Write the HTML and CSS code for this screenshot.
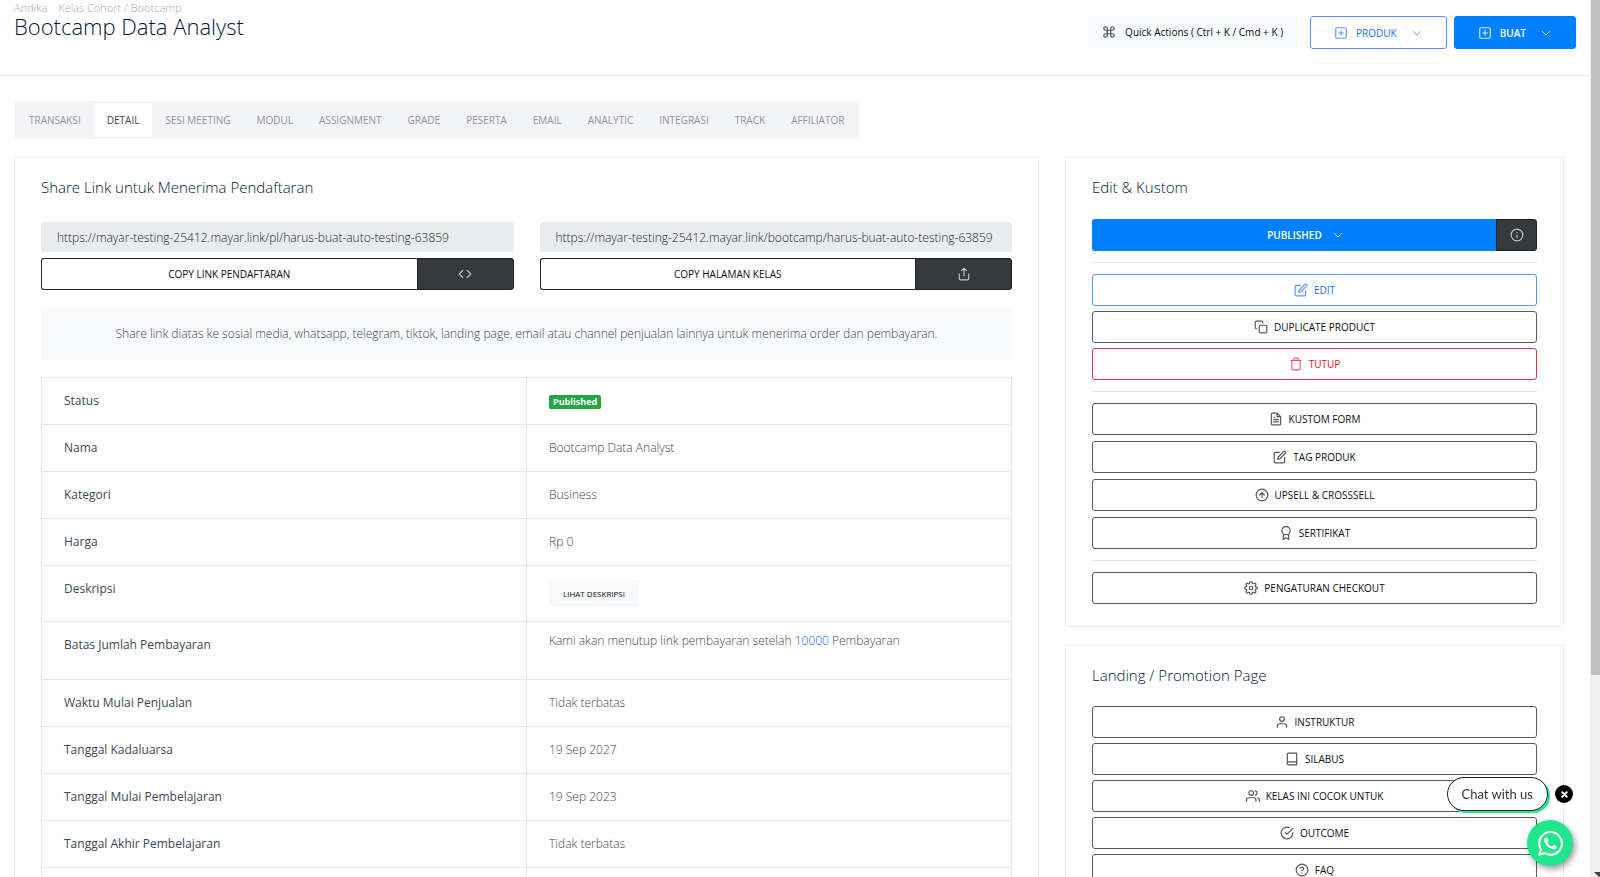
FILE: index.html
```html
<!DOCTYPE html>
<html lang="id">
<head>
<meta charset="utf-8">
<meta name="viewport" content="width=device-width, initial-scale=1">
<title>Bootcamp Data Analyst</title>
<link rel="stylesheet" href="styles.css">
</head>
<body>
<svg class="sprite" aria-hidden="true">
  <symbol id="i-command" viewBox="0 0 24 24"><path d="M18 3a3 3 0 0 0-3 3v12a3 3 0 1 0 3-3H6a3 3 0 1 0 3 3V6a3 3 0 1 0-3 3h12a3 3 0 1 0 0-6z"/></symbol>
  <symbol id="i-plus" viewBox="0 0 24 24"><rect x="3" y="3" width="18" height="18" rx="2"/><path d="M12 8v8M8 12h8"/></symbol>
  <symbol id="i-down" viewBox="0 0 24 24"><path d="M5 9l7 7 7-7"/></symbol>
  <symbol id="i-code" viewBox="0 0 24 24"><path d="M16 18l6-6-6-6M8 6l-6 6 6 6"/></symbol>
  <symbol id="i-share" viewBox="0 0 24 24"><path d="M4 12v8a2 2 0 0 0 2 2h12a2 2 0 0 0 2-2v-8M16 6l-4-4-4 4M12 2v13"/></symbol>
  <symbol id="i-info" viewBox="0 0 24 24"><circle cx="12" cy="12" r="10"/><path d="M12 16v-4M12 8h.01"/></symbol>
  <symbol id="i-edit" viewBox="0 0 24 24"><path d="M11 4H4a2 2 0 0 0-2 2v14a2 2 0 0 0 2 2h14a2 2 0 0 0 2-2v-7"/><path d="M18.500 2.500a2.121 2.121 0 0 1 3 3L12 15l-4 1 1-4 9.500-9.500z"/></symbol>
  <symbol id="i-copy" viewBox="0 0 24 24"><rect x="9" y="9" width="13" height="13" rx="2"/><path d="M5 15H4a2 2 0 0 1-2-2V4a2 2 0 0 1 2-2h9a2 2 0 0 1 2 2v1"/></symbol>
  <symbol id="i-trash" viewBox="0 0 24 24"><path d="M3 6h18M19 6v14a2 2 0 0 1-2 2H7a2 2 0 0 1-2-2V6M8 6V4a2 2 0 0 1 2-2h4a2 2 0 0 1 2 2v2"/></symbol>
  <symbol id="i-file" viewBox="0 0 24 24"><path d="M14 2H6a2 2 0 0 0-2 2v16a2 2 0 0 0 2 2h12a2 2 0 0 0 2-2V8zM14 2v6h6M16 13H8M16 17H8M10 9H8"/></symbol>
  <symbol id="i-up" viewBox="0 0 24 24"><circle cx="12" cy="12" r="10"/><path d="M16 12l-4-4-4 4M12 16V8"/></symbol>
  <symbol id="i-award" viewBox="0 0 24 24"><circle cx="12" cy="8" r="7"/><path d="M8.210 13.890L7 23l5-3 5 3-1.210-9.120"/></symbol>
  <symbol id="i-gear" viewBox="0 0 24 24"><circle cx="12" cy="12" r="3"/><path d="M19.400 15a1.650 1.650 0 0 0 .33 1.820l.06.06a2 2 0 0 1 0 2.830 2 2 0 0 1-2.830 0l-.06-.06a1.650 1.650 0 0 0-1.820-.33 1.650 1.650 0 0 0-1 1.510V21a2 2 0 0 1-2 2 2 2 0 0 1-2-2v-.09A1.650 1.650 0 0 0 9 19.400a1.650 1.650 0 0 0-1.820.33l-.06.06a2 2 0 0 1-2.830 0 2 2 0 0 1 0-2.830l.06-.06a1.650 1.650 0 0 0 .33-1.820 1.650 1.650 0 0 0-1.510-1H3a2 2 0 0 1-2-2 2 2 0 0 1 2-2h.09A1.650 1.650 0 0 0 4.600 9a1.650 1.650 0 0 0-.33-1.820l-.06-.06a2 2 0 0 1 0-2.830 2 2 0 0 1 2.830 0l.06.06a1.650 1.650 0 0 0 1.820.33H9a1.650 1.650 0 0 0 1-1.510V3a2 2 0 0 1 2-2 2 2 0 0 1 2 2v.09a1.650 1.650 0 0 0 1 1.510 1.650 1.650 0 0 0 1.820-.33l.06-.06a2 2 0 0 1 2.830 0 2 2 0 0 1 0 2.830l-.06.06a1.650 1.650 0 0 0-.33 1.820V9a1.650 1.650 0 0 0 1.510 1H21a2 2 0 0 1 2 2 2 2 0 0 1-2 2h-.09a1.650 1.650 0 0 0-1.510 1z"/></symbol>
  <symbol id="i-user" viewBox="0 0 24 24"><path d="M20 21v-2a4 4 0 0 0-4-4H8a4 4 0 0 0-4 4v2"/><circle cx="12" cy="7" r="4"/></symbol>
  <symbol id="i-book" viewBox="0 0 24 24"><path d="M4 19.500A2.500 2.500 0 0 1 6.500 17H20"/><path d="M6.500 2H20v20H6.500A2.500 2.500 0 0 1 4 19.500v-15A2.500 2.500 0 0 1 6.500 2z"/></symbol>
  <symbol id="i-users" viewBox="0 0 24 24"><path d="M17 21v-2a4 4 0 0 0-4-4H5a4 4 0 0 0-4 4v2"/><circle cx="9" cy="7" r="4"/><path d="M23 21v-2a4 4 0 0 0-3-3.870M16 3.130a4 4 0 0 1 0 7.750"/></symbol>
  <symbol id="i-check" viewBox="0 0 24 24"><path d="M22 11.080V12a10 10 0 1 1-5.930-9.140M22 4L12 14.010l-3-3"/></symbol>
  <symbol id="i-help" viewBox="0 0 24 24"><circle cx="12" cy="12" r="10"/><path d="M9.090 9a3 3 0 0 1 5.830 1c0 2-3 3-3 3M12 17h.01"/></symbol>
  <symbol id="i-x" viewBox="0 0 24 24"><path d="M6 6l12 12M18 6L6 18"/></symbol>
</svg>

<div class="app">
  <div class="page">
    <header class="header">
      <div class="heading">
        <nav class="crumbs" aria-label="Breadcrumb"><a href="#">Andika</a><a href="#">Kelas Cohort / Bootcamp</a></nav>
        <h1 class="title">Bootcamp Data Analyst</h1>
      </div>
      <div class="actions">
        <button class="btn btn-quick" type="button"><svg class="icon"><use href="#i-command"/></svg>Quick Actions ( Ctrl + K / Cmd + K )</button>
        <div class="actions-main">
          <button class="btn btn-head btn-outline-blue" type="button"><svg class="icon"><use href="#i-plus"/></svg>PRODUK<svg class="icon caret"><use href="#i-down"/></svg></button>
          <button class="btn btn-head btn-blue" type="button"><svg class="icon"><use href="#i-plus"/></svg>BUAT<svg class="icon caret"><use href="#i-down"/></svg></button>
        </div>
      </div>
    </header>

    <main class="content">
      <nav class="tabs" aria-label="Produk">
        <a class="tab" href="#">TRANSAKSI</a>
        <a class="tab tab-active" href="#" aria-current="page">DETAIL</a>
        <a class="tab" href="#">SESI MEETING</a>
        <a class="tab" href="#">MODUL</a>
        <a class="tab" href="#">ASSIGNMENT</a>
        <a class="tab" href="#">GRADE</a>
        <a class="tab" href="#">PESERTA</a>
        <a class="tab" href="#">EMAIL</a>
        <a class="tab" href="#">ANALYTIC</a>
        <a class="tab" href="#">INTEGRASI</a>
        <a class="tab" href="#">TRACK</a>
        <a class="tab" href="#">AFFILIATOR</a>
      </nav>

      <div class="columns">
        <section class="card">
          <h2 class="card-title">Share Link untuk Menerima Pendaftaran</h2>
          <div class="links">
            <div class="link">
              <input class="url" type="text" readonly aria-label="Link pendaftaran" value="https://mayar-testing-25412.mayar.link/pl/harus-buat-auto-testing-63859">
              <div class="split">
                <button class="btn btn-dark-line" type="button">COPY LINK PENDAFTARAN</button>
                <button class="btn btn-dark btn-side" type="button" aria-label="Embed"><svg class="icon"><use href="#i-code"/></svg></button>
              </div>
            </div>
            <div class="link">
              <input class="url" type="text" readonly aria-label="Halaman kelas" value="https://mayar-testing-25412.mayar.link/bootcamp/harus-buat-auto-testing-63859">
              <div class="split">
                <button class="btn btn-dark-line" type="button">COPY HALAMAN KELAS</button>
                <button class="btn btn-dark btn-side" type="button" aria-label="Bagikan"><svg class="icon"><use href="#i-share"/></svg></button>
              </div>
            </div>
          </div>
          <p class="note">Share link diatas ke sosial media, whatsapp, telegram, tiktok, landing page, email atau channel penjualan lainnya untuk menerima order dan pembayaran.</p>
          <table class="details">
            <tbody>
              <tr><th scope="row">Status</th><td><span class="badge">Published</span></td></tr>
              <tr><th scope="row">Nama</th><td>Bootcamp Data Analyst</td></tr>
              <tr><th scope="row">Kategori</th><td>Business</td></tr>
              <tr><th scope="row">Harga</th><td>Rp 0</td></tr>
              <tr><th scope="row">Deskripsi</th><td><button class="btn btn-light" type="button">LIHAT DESKRIPSI</button></td></tr>
              <tr class="row-limit"><th scope="row">Batas Jumlah Pembayaran</th><td>Kami akan menutup link pembayaran setelah <a href="#">10000</a> Pembayaran</td></tr>
              <tr><th scope="row">Waktu Mulai Penjualan</th><td>Tidak terbatas</td></tr>
              <tr><th scope="row">Tanggal Kadaluarsa</th><td>19 Sep 2027</td></tr>
              <tr><th scope="row">Tanggal Mulai Pembelajaran</th><td>19 Sep 2023</td></tr>
              <tr><th scope="row">Tanggal Akhir Pembelajaran</th><td>Tidak terbatas</td></tr>
              <tr><th scope="row"></th><td></td></tr>
            </tbody>
          </table>
        </section>

        <aside class="side">
          <section class="card">
            <h2 class="card-title">Edit &amp; Kustom</h2>
            <div class="split split-status">
              <button class="btn btn-blue" type="button">PUBLISHED<svg class="icon"><use href="#i-down"/></svg></button>
              <button class="btn btn-dark btn-info" type="button" aria-label="Info"><svg class="icon"><use href="#i-info"/></svg></button>
            </div>
            <hr class="rule">
            <div class="stack">
              <button class="btn btn-outline-blue" type="button"><svg class="icon"><use href="#i-edit"/></svg>EDIT</button>
              <button class="btn btn-line" type="button"><svg class="icon"><use href="#i-copy"/></svg>DUPLICATE PRODUCT</button>
              <button class="btn btn-outline-red" type="button"><svg class="icon"><use href="#i-trash"/></svg>TUTUP</button>
            </div>
            <hr class="rule">
            <div class="stack stack-loose">
              <button class="btn btn-line" type="button"><svg class="icon"><use href="#i-file"/></svg>KUSTOM FORM</button>
              <button class="btn btn-line" type="button"><svg class="icon"><use href="#i-edit"/></svg>TAG PRODUK</button>
              <button class="btn btn-line" type="button"><svg class="icon"><use href="#i-up"/></svg>UPSELL &amp; CROSSSELL</button>
              <button class="btn btn-line" type="button"><svg class="icon"><use href="#i-award"/></svg>SERTIFIKAT</button>
            </div>
            <hr class="rule">
            <div class="stack">
              <button class="btn btn-line" type="button"><svg class="icon"><use href="#i-gear"/></svg>PENGATURAN CHECKOUT</button>
            </div>
          </section>

          <section class="card">
            <h2 class="card-title">Landing / Promotion Page</h2>
            <div class="stack">
              <button class="btn btn-line" type="button"><svg class="icon"><use href="#i-user"/></svg>INSTRUKTUR</button>
              <button class="btn btn-line" type="button"><svg class="icon"><use href="#i-book"/></svg>SILABUS</button>
              <button class="btn btn-line" type="button"><svg class="icon"><use href="#i-users"/></svg>KELAS INI COCOK UNTUK</button>
              <button class="btn btn-line" type="button"><svg class="icon"><use href="#i-check"/></svg>OUTCOME</button>
              <button class="btn btn-line" type="button"><svg class="icon"><use href="#i-help"/></svg>FAQ</button>
            </div>
          </section>
        </aside>
      </div>
    </main>
  </div>
  <div class="scrollbar" aria-hidden="true"><div class="thumb"></div><svg class="arrow" viewBox="0 0 10 5"><path d="M0 0h10L5 5z"/></svg></div>
</div>

<div class="chat">
  <div class="chat-row">
    <button class="chat-label" type="button">Chat with us</button>
    <button class="chat-close" type="button" aria-label="Tutup chat"><svg class="icon"><use href="#i-x"/></svg></button>
  </div>
  <a class="chat-wa" href="#" aria-label="WhatsApp"><svg viewBox="0 0 24 24"><path d="M17.472 14.382c-.297-.149-1.758-.867-2.03-.967-.273-.099-.471-.148-.67.15-.197.297-.767.966-.94 1.164-.173.199-.347.223-.644.075-.297-.15-1.255-.463-2.39-1.475-.883-.788-1.48-1.761-1.653-2.059-.173-.297-.018-.458.13-.606.134-.133.298-.347.446-.52.149-.174.198-.298.298-.497.099-.198.05-.371-.025-.52-.075-.149-.669-1.612-.916-2.207-.242-.579-.487-.5-.669-.51-.173-.008-.371-.01-.57-.01-.198 0-.52.074-.792.372-.272.297-1.04 1.016-1.04 2.479 0 1.462 1.065 2.875 1.213 3.074.149.198 2.096 3.2 5.077 4.487.709.306 1.262.489 1.694.625.712.227 1.36.195 1.871.118.571-.085 1.758-.719 2.006-1.413.248-.694.248-1.289.173-1.413-.074-.124-.272-.198-.57-.347m-5.421 7.403h-.004a9.87 9.87 0 01-5.031-1.378l-.361-.214-3.741.982.998-3.648-.235-.374a9.86 9.86 0 01-1.51-5.26c.001-5.45 4.436-9.884 9.888-9.884 2.64 0 5.122 1.03 6.988 2.898a9.825 9.825 0 012.893 6.994c-.003 5.45-4.437 9.884-9.885 9.884m8.413-18.297A11.815 11.815 0 0012.05 0C5.495 0 .16 5.335.157 11.892c0 2.096.547 4.142 1.588 5.945L.057 24l6.305-1.654a11.882 11.882 0 005.683 1.448h.005c6.554 0 11.89-5.335 11.893-11.893a11.821 11.821 0 00-3.48-8.413z"/></svg></a>
</div>
</body>
</html>
```
FILE: styles.css
```css
* { box-sizing: border-box; }

body {
  margin: 0;
  background: #fff;
  color: #3b4856;
  font: 300 12px/18px "Open Sans", "Noto Sans", sans-serif;
}

h1, h2, p { margin: 0; }
a { color: inherit; text-decoration: none; }
.sprite { display: none; }

.icon {
  width: 14px;
  height: 14px;
  flex: none;
  fill: none;
  stroke: currentColor;
  stroke-width: 2;
  stroke-linecap: round;
  stroke-linejoin: round;
  opacity: 0.7;
}

/* Shell */
.app { display: flex; height: 100vh; overflow: hidden; }
.page { flex: 1; min-width: 0; }

.scrollbar {
  display: flex;
  flex-direction: column;
  justify-content: space-between;
  width: 10px;
  padding-left: 1px;
  background: #f1f1f1;
  overflow: hidden;
}
.thumb { height: 77%; background: #c1c1c1; }
.arrow { width: 10px; height: 5px; margin-left: 3px; fill: #404040; }

/* Header */
.header {
  display: flex;
  justify-content: space-between;
  align-items: flex-start;
  height: 76px;
  padding: 0 14px;
  border-bottom: 1px solid #e5e9f2;
}
.crumbs { display: flex; gap: 11px; font-size: 11px; line-height: 15px; color: #a4a8af; }
.title { font-size: 22px; line-height: 22px; font-weight: 300; color: #001737; }
.actions { display: flex; gap: 13px; padding-top: 16px; }
.actions-main { display: flex; gap: 7px; }

/* Buttons */
.btn {
  display: flex;
  align-items: center;
  justify-content: center;
  gap: 6px;
  height: 32px;
  padding: 0 12px;
  border: 1px solid transparent;
  border-radius: 3px;
  background: #fff;
  color: #0b0e14;
  font: 10px/14px "Open Sans", "Noto Sans", sans-serif;
  white-space: nowrap;
}
.btn-quick { gap: 9px; padding: 0 13px; background: #f8f9fc; }
.btn-head { height: 33px; gap: 8px; padding: 0 23px; }
.btn-head .caret { width: 12px; height: 12px; margin-left: 6px; }
.btn-blue { background: #0080ff; border-color: #0080ff; color: #fff; font-weight: 600; }
.btn-blue .icon { opacity: 0.85; }
.btn-outline-blue { border-color: #5b93f8; color: #1a6ef0; }
.btn-outline-red { border-color: #dc3545; color: #dc1428; }
.btn-line { border-color: #565b62; }
.btn-dark-line { border-color: #23272c; }
.btn-dark { background: #343a40; border-color: #1d2125; color: #fff; }
.btn-light { height: 27px; padding: 0 13px; background: #f8f9fb; font-size: 8px; }

.split { display: flex; }
.split .btn:first-child { flex: 1; border-right: 0; border-radius: 3px 0 0 3px; }
.split .btn:last-child { border-radius: 0 3px 3px 0; }
.btn-side { width: 97px; }
.btn-info { width: 41px; padding: 0; }
.split-status .btn-blue { gap: 10px; padding-left: 34px; }
.split-status .btn-blue .icon { width: 12px; height: 12px; }

/* Content */
.content { padding: 25px 26px 0 14px; }

.tabs {
  display: inline-flex;
  padding: 2px;
  border-radius: 3px;
  background: #f3f4f8;
}
.tab { padding: 0 13px; font-size: 10px; line-height: 34px; font-weight: 400; color: #8f959e; }
.tab-active { background: #fff; color: #3b4653; }

.columns {
  display: grid;
  grid-template-columns: 1025fr 499fr;
  gap: 26px;
  align-items: start;
  margin-top: 17px;
}
.side { display: grid; gap: 17px; }
.card { min-width: 0; padding: 20px 26px 22px; border: 1px solid #e9ecf2; border-radius: 3px; }
.card-title { font-size: 15px; line-height: 20px; font-weight: 300; color: #001737; }

.links { display: grid; grid-template-columns: 1fr 1fr; gap: 26px; margin-top: 25px; }
.link { display: grid; gap: 6px; }
.url {
  width: 100%;
  height: 30px;
  padding: 0 16px;
  border: 0;
  border-radius: 3px;
  background: #e9ecef;
  color: #1c242c;
  font: 300 12px/18px "Open Sans", "Noto Sans", sans-serif;
}
.note {
  margin-top: 17px;
  padding: 17px;
  border-radius: 3px;
  background: #f8f9fb;
  line-height: 19px;
  text-align: center;
}

.details { width: 100%; margin-top: 17px; border-collapse: collapse; table-layout: fixed; }
.details th, .details td {
  height: 47px;
  padding: 14px 22px;
  border: 1px solid #e5e9ee;
  text-align: left;
  vertical-align: top;
}
.details th { font-weight: 500; }
.details a { color: #0168fa; }
.details .row-limit th { height: 58px; }
.details .row-limit td { padding-top: 10px; }

.badge {
  display: inline-block;
  padding: 0 4px;
  border-radius: 2px;
  background: #22a745;
  color: #fff;
  font-size: 9px;
  font-weight: 700;
  line-height: 14px;
}

.split-status { margin-top: 22px; }
.rule { width: 100%; margin: 11px 0; border: 0; border-top: 1px solid #e3e5e8; }
.stack { display: grid; gap: 5px; }
.stack-loose { gap: 6px; }
.card-title + .stack { margin-top: 21px; }

/* Chat widget */
.chat {
  position: fixed;
  right: 27px;
  bottom: 11px;
  display: flex;
  flex-direction: column;
  align-items: flex-end;
  gap: 9px;
}
.chat-row { display: flex; align-items: center; gap: 7px; }
.chat-label {
  height: 34px;
  padding: 0 14px;
  border: 1px solid #222;
  border-radius: 17px;
  background: #fff;
  box-shadow: 2px 2px 0 #20e68c;
  color: #333;
  font: 13px/18px Lato, "Open Sans", sans-serif;
}
.chat-close {
  display: grid;
  place-items: center;
  width: 18px;
  height: 18px;
  padding: 0;
  border: 0;
  border-radius: 50%;
  background: #000;
  color: #fff;
}
.chat-close .icon { width: 9px; height: 9px; stroke-width: 5; opacity: 1; }
.chat-wa {
  display: grid;
  place-items: center;
  width: 46px;
  height: 46px;
  border-radius: 50%;
  background: #20e68c;
  box-shadow: 2px 3px 6px rgba(0, 0, 0, 0.4);
}
.chat-wa svg { width: 25px; height: 25px; fill: #fff; }
```
